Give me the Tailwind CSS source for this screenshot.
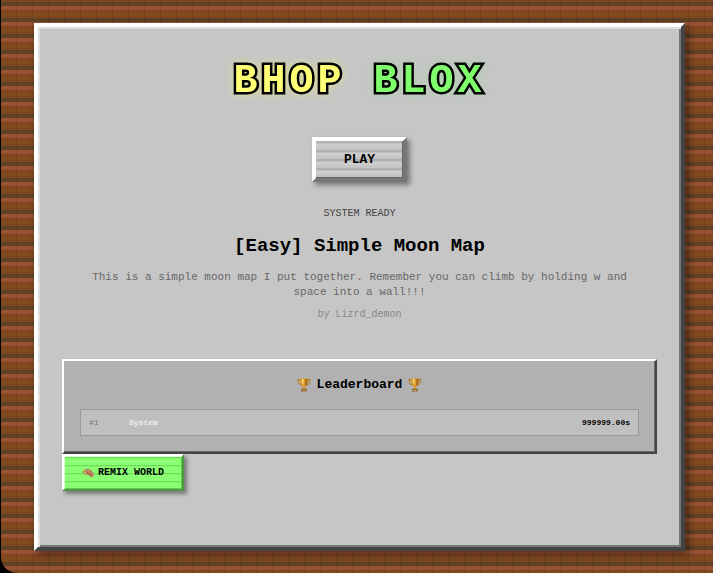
<!doctype html>
<html lang="en">

<head>
	<meta charset="UTF-8" />
	<meta name="viewport" content="width=device-width, initial-scale=1.0" />
	<title>Bhop Blox</title>
	<script src="https://cdn.jsdelivr.net/npm/@tailwindcss/browser@4"></script>
</head>

<body class="bg-black font-['Courier_New','Liberation_Mono',monospace]">
	<!-- Wood planks: faint vertical seams over the horizontal boards -->
	<div class="ml-px min-h-screen flex rounded-bl-2xl pt-[23px] pr-7 pb-[22px] pl-[33px] bg-[repeating-linear-gradient(90deg,transparent_0_15px,rgba(60,35,10,0.18)_15px_16px),repeating-linear-gradient(180deg,#80471f_0_2px,#5e4226_2px_6px,#985236_6px_10px,#7b421b_10px_11px,#82481f_11px_16px)]">
		<main class="flex-1 min-w-0 bg-[#c6c6c6] border-4 border-t-white border-l-white border-r-[#444] border-b-[#444] shadow-[inset_2px_2px_0_#dedede,inset_-2px_-2px_0_#777,4px_4px_8px_rgba(0,0,0,0.4)] px-6 pt-[31px] pb-6 text-center">
			<h1 class="text-[40px] leading-12 font-bold tracking-[4px] [-webkit-text-stroke:5px_#000] [paint-order:stroke_fill]">
				<span class="text-[#ffff75] drop-shadow-[0_0_4px_rgba(255,255,85,0.4)]">BHOP</span>
				<span class="text-[#7fff6b] drop-shadow-[0_0_4px_rgba(85,255,85,0.2)]">BLOX</span>
			</h1>

			<button type="button" class="mt-[31px] h-[45px] w-[95px] block mx-auto border-4 border-t-white border-l-white border-r-[#777] border-b-[#777] bg-[repeating-linear-gradient(180deg,#b0b0b0_0_2px,#d0d0d0_3px,#c4c4c4_8px_9px)] shadow-[inset_-1px_-1px_0_#666,3px_3px_5px_rgba(0,0,0,0.4)] text-[13px] font-bold text-black">PLAY</button>

			<p class="mt-6 text-[10px] leading-4 text-[#444]">SYSTEM READY</p>
			<h2 class="mt-3 text-[19px] leading-6 font-bold text-black">[Easy] Simple Moon Map</h2>
			<p class="mt-3 mx-auto max-w-[560px] text-[11px] leading-[15px] text-[#666]">This is a simple moon map I put together. Remember you can climb by holding w and space into a wall!!!</p>
			<p class="mt-[7px] text-[10px] leading-4 text-[#888]">by Lizrd_demon</p>

			<section class="mt-9 border-2 border-t-white border-l-white border-r-[#444] border-b-[#444] bg-[#b1b1b1] shadow-[inset_-1px_-1px_0_#666] px-4 pt-[14px] pb-4">
				<h3 class="flex items-center justify-center gap-1.5 text-[13px] leading-5 font-bold text-black">
					<svg class="size-[14px]" viewBox="0 0 26 26" aria-hidden="true">
						<path d="M7 3H2c0 7 3 10 7 10M19 3h5c0 7-3 10-7 10" fill="none" stroke="#b77d20" stroke-width="2" />
						<path d="M6 1h14c0 9-2 13-5 15v5h-4v-5C8 14 6 10 6 1z" fill="#d79a28" />
						<path d="M9 2h3v11C10 11 9 7 9 2z" fill="#ffe486" />
						<path d="M16 2h4c0 8-2 12-5 14z" fill="#a66518" />
						<path d="M8 20h10v5H8z" fill="#80501e" />
						<path d="M10 22h6v2h-6z" fill="#d9b56b" />
					</svg>
					<span>Leaderboard</span>
					<svg class="size-[14px]" viewBox="0 0 26 26" aria-hidden="true">
						<path d="M7 3H2c0 7 3 10 7 10M19 3h5c0 7-3 10-7 10" fill="none" stroke="#b77d20" stroke-width="2" />
						<path d="M6 1h14c0 9-2 13-5 15v5h-4v-5C8 14 6 10 6 1z" fill="#d79a28" />
						<path d="M9 2h3v11C10 11 9 7 9 2z" fill="#ffe486" />
						<path d="M16 2h4c0 8-2 12-5 14z" fill="#a66518" />
						<path d="M8 20h10v5H8z" fill="#80501e" />
						<path d="M10 22h6v2h-6z" fill="#d9b56b" />
					</svg>
				</h3>
				<table class="mt-[14px] w-full border border-[#999] bg-[#bfbfbf] text-[8px] leading-[25px] border-separate border-spacing-0">
					<tbody>
						<tr>
							<td class="w-12 pl-2 text-left text-[#777]">#1</td>
							<td class="text-left font-bold text-[#eee]">System</td>
							<td class="pr-2 text-right font-bold text-black">999999.00s</td>
						</tr>
					</tbody>
				</table>
			</section>

			<button type="button" class="flex items-center justify-center gap-1 w-[122px] h-[37px] border-2 border-t-white border-l-white border-r-[#4b9a40] border-b-[#4b9a40] bg-[repeating-linear-gradient(180deg,#8aff74_0_1px,#70dc5e_1px_2px,#84f56f_2px_3px,#8aff74_3px_8px)] shadow-[inset_1px_1px_0_#d8ffd0,inset_-1px_-1px_0_#62c554,3px_3px_4px_rgba(0,0,0,0.4)] text-[10px] font-bold text-black">
				<svg class="w-3 h-[10px]" viewBox="0 0 24 20" aria-hidden="true">
					<path d="M2 6C5 0 14 0 19 5c5 5 6 10 3 13-3 2-6 0-8-3-2-2-4 0-7-1C2 12 0 9 2 6z" fill="#c08a5c" />
					<circle cx="6" cy="5" r="1.5" fill="#e6c34a" />
					<circle cx="11" cy="4" r="1.5" fill="#6b8fc0" />
					<circle cx="17" cy="8" r="1.5" fill="#c4605a" />
					<circle cx="20" cy="13" r="1.5" fill="#8a55aa" />
					<circle cx="6" cy="10" r="1.5" fill="#8aff74" />
					<path d="M9 7l9 9" stroke="#7d5a30" stroke-width="2" />
				</svg>
				REMIX WORLD
			</button>
		</main>
	</div>
</body>

</html>
